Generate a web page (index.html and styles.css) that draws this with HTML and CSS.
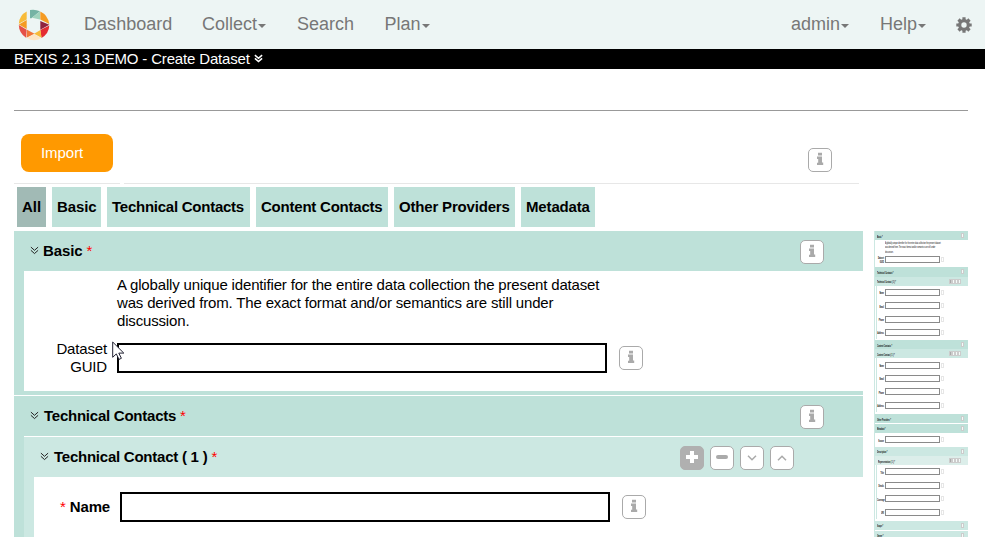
FILE: index.html
```html
<!DOCTYPE html>
<html lang="en">
<head>
<meta charset="utf-8">
<title>BEXIS 2.13 DEMO - Create Dataset</title>
<link rel="stylesheet" href="styles.css">
</head>
<body>
<svg class="defs" width="0" height="0">
  <symbol id="info" viewBox="0 0 24 24"><path fill="#aaa" d="M10 4.800h4v2.600h-4zM9 8.600h5v6h1.200V17H9v-2.300h1.200v-3.700H9z"/></symbol>
  <symbol id="dbl" viewBox="0 0 10 10"><path fill="none" stroke="currentColor" d="M1 1.200l4 3.600 4-3.600M1 4.800l4 3.600 4-3.600"/></symbol>
</svg>
<nav class="navbar">
  <svg class="logo" viewBox="0 0 32 32">
    <path fill="#74b3a4" d="M12 1Q17 0 22 2.200L13 9.500 12 9z"/>
    <path fill="#9fd3bd" d="M22 2.200V10.500l-8-1.700z"/>
    <path fill="#f59b23" d="M22.300 2.400Q30 6 31.300 15L22.300 10.500z"/>
    <path fill="#f8bb39" d="M8.700 2.500Q1.500 6 .8 14.800L8.700 10.500z"/>
    <path fill="#f59b23" d="M8.700 11v9L.8 15.500z"/>
    <path fill="#8f2340" d="M22.300 12l9 3.700-9 5z"/>
    <path fill="#e55048" d="M.8 16l7.900 4.800-.7 8Q1 24 .8 16z"/>
    <path fill="#e42c32" d="M31.300 16.500Q31 24.500 23.500 29L22.300 21z"/>
    <path fill="#f27638" d="M9 20.800l7.500 4-8 4z"/>
    <path fill="#f8bb39" d="M22.500 21l1 7.800L16 24.800z"/>
    <path fill="#fde5c4" d="M9 29l7-4 7.200 4q-7 4.500-14.200 0z"/>
  </svg>
  <a class="link dash">Dashboard</a>
  <a class="link coll">Collect<i class="caret"></i></a>
  <a class="link sear">Search</a>
  <a class="link plan">Plan<i class="caret"></i></a>
  <a class="link admin">admin<i class="caret"></i></a>
  <a class="link help">Help<i class="caret"></i></a>
  <svg class="gear" viewBox="0 0 16 16"><circle cx="8" cy="8" r="4.300" fill="none" stroke="#777" stroke-width="3.200"/><path stroke="#777" stroke-width="3.200" d="M8 .3v3M8 12.700v3M.3 8h3M12.700 8h3M2.500 2.500l2 2M11.500 11.500l2 2M2.500 13.500l2-2M11.500 4.500l2-2"/></svg>
</nav>
<div class="titlebar"><span>BEXIS 2.13 DEMO - Create Dataset</span><svg class="dbl"><use href="#dbl"/></svg></div>
<hr class="rule">
<div class="page">
  <main class="editor">
    <div class="toolbar">
      <button class="import">Import</button>
      <span class="ibtn"><svg><use href="#info"/></svg></span>
    </div>
    <div class="split"><i></i><i></i></div>
    <div class="tabs"><a class="on">All</a><a>Basic</a><a>Technical Contacts</a><a>Content Contacts</a><a>Other Providers</a><a>Metadata</a></div>
    <section class="section">
      <header class="head"><svg class="dbl"><use href="#dbl"/></svg><b>Basic</b><em>*</em><span class="ibtn"><svg><use href="#info"/></svg></span></header>
      <div class="body basic">
        <p>A globally unique identifier for the entire data collection the present dataset was derived from. The exact format and/or semantics are still under discussion.</p>
        <div class="field"><label>Dataset<br>GUID</label><input type="text"><span class="ibtn"><svg><use href="#info"/></svg></span></div>
      </div>
    </section>
    <section class="section tech">
      <header class="head"><svg class="dbl"><use href="#dbl"/></svg><b class="wide">Technical Contacts</b><em>*</em><span class="ibtn"><svg><use href="#info"/></svg></span></header>
      <div class="sub">
        <header class="head"><svg class="dbl"><use href="#dbl"/></svg><b class="wide">Technical Contact ( 1 )</b><em>*</em>
          <div class="actions">
            <span class="ibtn full"><svg viewBox="0 0 24 24"><path stroke="#fff" stroke-width="4" d="M12 5v12M6 11h12"/></svg></span>
            <span class="ibtn"><svg viewBox="0 0 24 24"><path stroke="#aaa" stroke-width="4" stroke-linecap="round" d="M8 11h8"/></svg></span>
            <span class="ibtn"><svg viewBox="0 0 24 24"><path fill="none" stroke="#aaa" stroke-width="1.500" d="M8 9.800l4 4 4-4"/></svg></span>
            <span class="ibtn"><svg viewBox="0 0 24 24"><path fill="none" stroke="#aaa" stroke-width="1.500" d="M8 14.200l4-4 4 4"/></svg></span>
          </div>
        </header>
        <div class="body contact">
          <div class="field"><label><em>*</em> <b>Name</b></label><input type="text"><span class="ibtn"><svg><use href="#info"/></svg></span></div>
        </div>
      </div>
    </section>
  </main>
  <aside class="map" id="map"></aside>
</div>
<svg class="cursor" viewBox="0 0 13 19"><path fill="#fff" stroke="#223" d="M.7 1v15.300l3.600-3.400 2.700 5.500 2.400-1.100-2.600-5.200h5z"/></svg>
<script src="map.js"></script>
</body>
</html>
```
FILE: styles.css
```css
* { box-sizing: border-box; }
html, body { height: 537px; overflow: hidden; }
body { margin: 0; background: #fff; color: #000; font: 15px/18px "Liberation Sans", Arial, sans-serif; }
.defs { position: absolute; }
em { color: #f00; font-style: normal; }
svg { display: block; flex: none; }

.navbar { height: 49px; background: #edf5f4; display: flex; align-items: center; padding: 0 13px 0 18px; color: #777; font-size: 18px; line-height: 20px; }
.logo { width: 32px; height: 32px; margin-right: 34px; }
.link { display: flex; align-items: center; padding-bottom: 1px; }
.dash { width: 118px; letter-spacing: .04px; }
.coll { width: 95px; }
.sear { width: 87.5px; }
.admin { margin-left: auto; width: 89px; }
.help { width: 76px; }
.caret { border: 4px solid transparent; border-top-color: #777; border-bottom: 0; margin: 3px 0 0 1px; }
.gear { width: 16px; height: 16px; }

.titlebar { height: 20px; background: #000; color: #fff; display: flex; align-items: center; padding-left: 14px; line-height: 20px; letter-spacing: -.16px; }
.titlebar .dbl { margin-left: 4px; margin-top: -1px; stroke-width: 1.7; }
.dbl { width: 9px; height: 9px; margin-top: -1px; stroke-width: 1.1; color: #222; }
.titlebar .dbl { color: #fff; }
.rule { border: 0; height: 1px; background: #999; margin: 41px 17px 0 14px; }

.page { display: flex; align-items: flex-start; padding-left: 14px; gap: 11px; height: 426px; overflow: hidden; }
.editor { width: 849px; }
.toolbar { height: 72px; display: flex; justify-content: space-between; padding: 23px 31px 0 7px; }
.toolbar .ibtn { margin-top: 14px; }
.import { width: 92px; height: 38px; border: 0; border-radius: 8px; background: #f90; color: #fff; font: inherit; text-align: left; padding: 0 0 0 20px; letter-spacing: -.05px; }
.split { display: flex; gap: 4px; height: 4px; }
.split i { width: 106px; height: 1px; background: #e7e7e7; }
.split i + i { width: 735px; }
.tabs { display: flex; gap: 6px; padding-left: 3px; height: 44px; }
.tabs a { height: 40px; line-height: 40px; padding: 0 5px; background: #bee1d9; font-weight: bold; white-space: nowrap; letter-spacing: -.1px; width: 49px; }
.tabs .on { background: #a1bab5; width: 29px; letter-spacing: 0; }
.tabs a:nth-child(3) { width: 143px; letter-spacing: -.25px; }
.tabs a:nth-child(4) { width: 132px; letter-spacing: -.22px; }
.tabs a:nth-child(5) { width: 121px; letter-spacing: -.18px; }
.tabs a:nth-child(6) { width: 74px; letter-spacing: -.15px; }

.ibtn { width: 24px; height: 24px; flex: none; border: 1px solid #aaa; border-radius: 5px; background: #fff; }
.ibtn svg { width: 24px; height: 24px; margin: -1px; }
.full { background: #b0b0b0; border-color: #b0b0b0; }

.section { background: #bee1d9; padding: 0 0 4px 10px; border-bottom: 1px solid #fff; }
.head { height: 40px; display: flex; align-items: center; padding: 0 39px 0 6px; }
.head b { margin-left: 4px; letter-spacing: -.1px; }
.head .wide { margin-left: 5px; letter-spacing: -.24px; }
.head em { margin: -1px 0 0 4px; }
.head > .ibtn { margin: 2px 0 0 auto; }
.body { background: #fff; }
.basic { height: 120px; padding-top: 5px; }
.basic p { margin: 0 0 13px 93px; width: 495px; letter-spacing: -.165px; }
.field { display: flex; }
.field input { width: 490px; height: 30px; border: 2px solid #000; background: #fff; padding: 0; }
.field label { width: 93px; padding-right: 10px; text-align: right; margin-top: -3px; flex: none; letter-spacing: -.16px; }
.field .ibtn { margin: 3px 0 0 12px; }
.tech { height: 200px; }
.sub { background: #cce8e2; border-top: 1px solid #fff; padding-left: 10px; }
.actions { display: flex; gap: 6px; margin: 2px 30px 0 auto; }
.contact { height: 120px; padding-top: 15px; }
.contact label { width: 86px; margin-top: 6px; }

.map { width: 94px; margin-top: 120px; font-size: 1.7px; line-height: 2px; font-weight: bold; border-left: 1px solid #cce8e2; }
.mhead { background: #bee1d9; display: flex; align-items: center; padding: 0 4px 0 2px; }
.mhead.l { background: #cce8e2; }
.mhead.xl { background: #dceeea; padding-left: 3px; }
.mhead u { width: 3px; height: 5px; background: #f4faf8; border: .5px solid #ccc; text-decoration: none; }
.mhead.tools { padding-right: 7px; }
.mhead span { margin-right: auto; transform: scaleY(2.1); }
.mhead .k { background: #aaa; }
.mbody { background: #fff; }
.mbody.in { border-left: 1px solid #cce8e2; margin-left: 1px; }
.mrow { height: 13.4px; display: flex; align-items: center; }
.mrow label { width: 10px; text-align: right; padding-right: 1px; flex: none; transform: scaleY(2.1); }
.in label { width: 8px; }
.mrow s { width: 55px; height: 7px; border: 1px solid #8a8a8a; }
.mrow u { width: 2.5px; height: 5px; border: 1px solid #e6e6e6; margin-left: 1px; }
.mtext { margin: 0; padding: 1px 0 0 10px; width: 66px; height: 5.7px; margin-bottom: 6.8px; font-weight: normal; font-size: 1.7px; line-height: 1.9px; transform: scaleY(2.1); transform-origin: 0 0; }
.cursor { position: absolute; left: 112px; top: 341px; width: 13px; height: 19px; }
```
FILE: map.js
```js
// Thumbnail overview of the whole form.
const top4 = ["Name", "Email", "Phone", "Address"];
const sections = [
  { title: "Basic", h: 9.3, text: true, rows: ["Dataset<br>GUID"], after: .7 },
  { title: "Technical Contacts", h: 9.7 },
  { title: "Technical Contact ( 1 )", h: 9, level: "l", rows: top4, inner: true, after: .8 },
  { title: "Content Contacts", h: 9.5 },
  { title: "Content Contact ( 1 )", h: 9, level: "l", rows: top4, inner: true, after: 2.2 },
  { title: "Other Providers", h: 9, after: .8 },
  { title: "Metadata", h: 9, rows: ["Source"], after: .5 },
  { title: "Description", h: 9, level: "l" },
  { title: "Representation ( 1 )", h: 9.4, level: "xl", rows: ["Title", "Details", "Coverage", "URI"], inner: true, after: 1.8 },
  { title: "Scope", h: 9.5, level: "l", after: .8 },
  { title: "Owner", h: 9, level: "l" }
];
document.getElementById("map").innerHTML = sections.map(s => {
  const multi = s.title.includes("( 1 )");
  const tools = multi ? '<u class="k"></u><u></u><u></u><u></u>' : "<u></u>";
  let out = `<div class="mhead ${s.level || ""} ${multi ? "tools" : ""}" style="height:${s.h}px"><span>${s.title} *</span>${tools}</div>`;
  if (s.rows) {
    const text = s.text ? '<p class="mtext">A globally unique identifier for the entire data collection the present dataset was derived from. The exact format and/or semantics are still under discussion.</p>' : "";
    out += `<div class="mbody ${s.inner ? "in" : ""}" style="margin-bottom:${s.after}px">${text}` +
      s.rows.map(r => `<div class="mrow"><label>${r}</label><s></s><u></u></div>`).join("") + "</div>";
  } else if (s.after) {
    out += `<div style="height:${s.after}px"></div>`;
  }
  return out;
}).join("");
```
